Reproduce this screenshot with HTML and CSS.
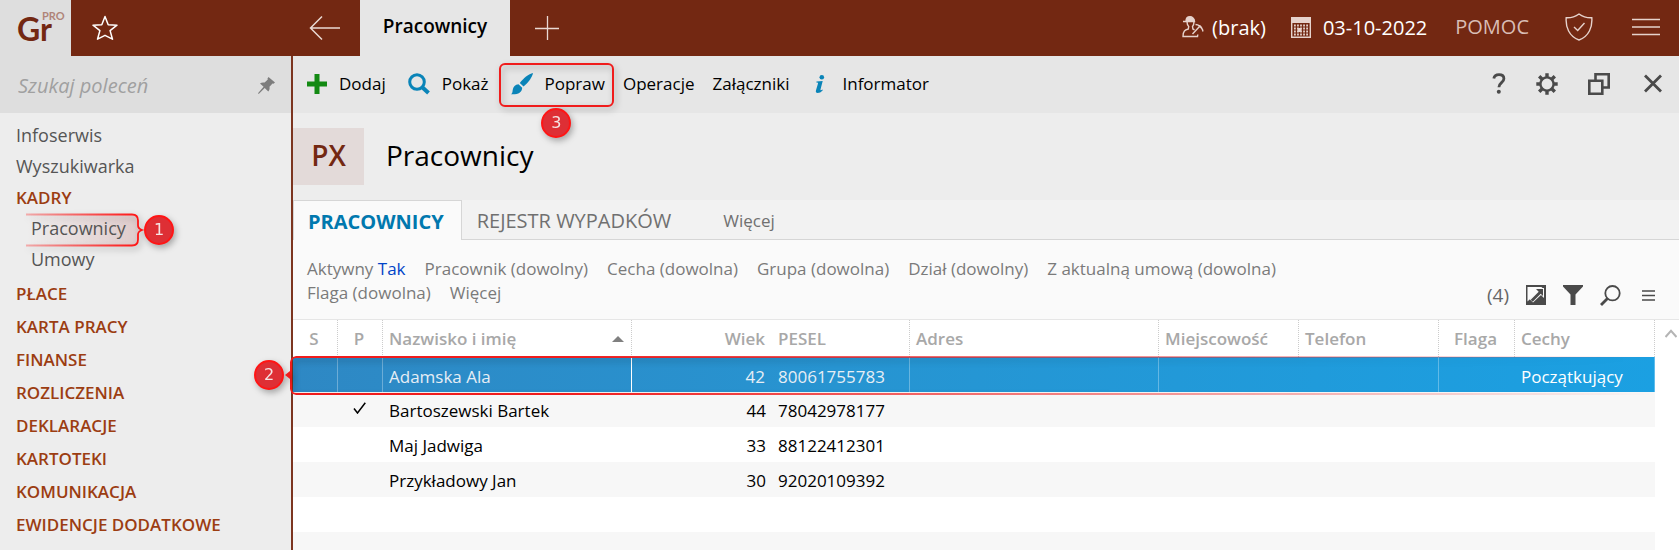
FILE: index.html
```
<!DOCTYPE html>
<html lang="pl">
<head>
    <meta charset="UTF-8">
    <meta name="viewport" content="width=device-width, initial-scale=1.0">
    <title>Pracownicy</title>
    <link rel="stylesheet" href="styles.css">
</head>
<body>
    <header class="topbar">
        <a href="#" class="logo">Gr<sup>PRO</sup></a>
        <button class="star" aria-label="Ulubione">
            <svg width="26" height="26" viewBox="0 0 26 26"><path d="M13 1.5l3.2 8.2 8.8.5-6.9 5.4 2.4 8.6L13 20.3l-7.5 3.9 2.4-8.6L1 10.2l8.8-.5z" fill="none" stroke="#fff" stroke-width="1.5" stroke-linejoin="round"/></svg>
        </button>
        <button class="back" aria-label="Wstecz">
            <svg width="32" height="26" viewBox="0 0 32 26"><path d="M13 1.5L1.5 13 13 24.5M1.5 13H31" fill="none" stroke="#ead9d4" stroke-width="1.5"/></svg>
        </button>
        <button class="card">Pracownicy</button>
        <button class="new-card" aria-label="Nowa karta">
            <svg width="24" height="24" viewBox="0 0 24 24"><path d="M12.5 0v24M0 12.5h24" stroke="#ead9d4" stroke-width="1.3"/></svg>
        </button>
        <div class="status">
            <button class="user">
                <svg width="22" height="22" viewBox="0 0 22 22" fill="none" stroke="#e6d2cc" stroke-width="1.4">
                    <path d="M1 5.500h3C4 2 6 .8 8 .8s4.500 1.500 4.500 4.700z" fill="#e6d2cc"/>
                    <path d="M5 5.500c0 3 .5 4 1.700 5l-.4 2.500C3 14 1 15 1 20.500h14.500l.3-2M12 5.500c0 3-.5 4-1.500 5l.4 2.500 1.600.8M16 9.500c2-.5 4 1.500 5 6M13.500 8.500c2 0 5.500 2 7.500 6M18 10l-7.500 8"/>
                </svg>
                (brak)
            </button>
            <button class="date">
                <svg width="20" height="21" viewBox="0 0 20 21">
                    <path d="M.7.7h18.600v19.600H.7z" fill="none" stroke="#e6d2cc" stroke-width="1.4"/>
                    <path d="M0 0h20v6H0z" fill="#e6d2cc"/>
                    <path d="M3 8.500h14M3 11.500h14M3 14.500h14M3 17.500h14" stroke="#e6d2cc" stroke-width="1.8" stroke-dasharray="1.8 1.250"/>
                    <path d="M6.500 11h4v4h-4z" fill="#e6d2cc"/>
                </svg>
                03-10-2022
            </button>
            <a href="#" class="help">POMOC</a>
            <button class="shield" aria-label="Bezpieczeństwo">
                <svg width="28" height="28" viewBox="0 0 28 28" fill="none" stroke="#e6d2cc" stroke-width="1.4"><path d="M14 1c4 3 8 4 12.800 3.800C27.500 14 24 23.500 14 27 4 23.500.5 14 1.200 4.800 6 5 10 4 14 1z"/><path d="M9 14l3.700 3.500L19.500 10"/></svg>
            </button>
            <button aria-label="Menu">
                <svg width="28" height="18" viewBox="0 0 28 18"><path d="M0 1.500h28M0 9h28M0 16.500h28" stroke="#e6d2cc" stroke-width="1.5"/></svg>
            </button>
        </div>
    </header>

    <div class="layout">
        <aside class="sidebar">
            <div class="search">
                <input type="text" placeholder="Szukaj poleceń" aria-label="Szukaj poleceń">
                <button aria-label="Przypnij">
                    <svg width="17" height="17" viewBox="0 0 17 17"><path d="M10.500 0L17 5.500l-1.500 1.200-1-.2-3 3.300c.4 2-.1 3.500-1.200 4.700L6.700 11 1.200 16.500 0 17l.4-1.300L5.600 9.800 2 6.500c1.300-1 2.800-1.300 4.600-.9l3.200-3-.3-1.200z" fill="#7d7d7d"/></svg>
                </button>
            </div>
            <nav>
                <a href="#">Infoserwis</a>
                <a href="#">Wyszukiwarka</a>
                <a href="#" class="section open">KADRY</a>
                <div class="sub marked">
                    <a href="#">Pracownicy</a>
                    <div class="callout callout-menu">
                        <svg width="120" height="34" viewBox="0 0 120 34">
                            <defs>
                                <linearGradient id="fade" gradientUnits="userSpaceOnUse" x1="0" y1="0" x2="112" y2="0">
                                    <stop offset="0" stop-color="#ff1515" stop-opacity=".3"/>
                                    <stop offset="1" stop-color="#ff1515"/>
                                </linearGradient>
                                <linearGradient id="tint">
                                    <stop offset="0" stop-color="#e03030" stop-opacity="0"/>
                                    <stop offset="1" stop-color="#c03030" stop-opacity=".14"/>
                                </linearGradient>
                            </defs>
                            <path d="M0 1.500h106q6 0 6 6v5q0 3 4 4.500-4 1.500-4 4.500v5q0 6-6 6H0z" fill="url(#tint)"/>
                            <path d="M0 1.500h106q6 0 6 6v5q0 3 4 4.500-4 1.500-4 4.500v5q0 6-6 6H0" fill="none" stroke="url(#fade)" stroke-width="1.8"/>
                        </svg>
                        <span class="badge">1</span>
                    </div>
                </div>
                <a href="#" class="sub">Umowy</a>
                <a href="#" class="section first">PŁACE</a>
                <a href="#" class="section">KARTA PRACY</a>
                <a href="#" class="section">FINANSE</a>
                <a href="#" class="section">ROZLICZENIA</a>
                <a href="#" class="section">DEKLARACJE</a>
                <a href="#" class="section">KARTOTEKI</a>
                <a href="#" class="section">KOMUNIKACJA</a>
                <a href="#" class="section">EWIDENCJE DODATKOWE</a>
            </nav>
        </aside>

        <main>
            <div class="toolbar">
                <button class="main-action">
                    <svg width="20" height="20" viewBox="0 0 20 20"><path d="M7.500 0h5v7.500H20v5h-7.500V20h-5v-7.500H0v-5h7.500z" fill="#138a13"/></svg>
                    Dodaj
                </button>
                <button class="main-action">
                    <svg width="22" height="22" viewBox="0 0 22 22" fill="none" stroke="#0a84b8"><circle cx="9" cy="9" r="7.300" stroke-width="3"/><path d="M14 14l6.500 6" stroke-width="4"/></svg>
                    Pokaż
                </button>
                <button class="edit">
                    <svg width="22" height="22" viewBox="0 0 22 22" fill="#0a84b8"><path d="M22 0c-.5 4-5 10-9.500 13.500L8.800 10C12 5.500 18 .8 22 0z"/><path d="M7.500 11.200l3.700 3.600c-.2 5-4.500 7-11.200 6.500 1.500-.8 1.400-2.300 1.700-4.300.5-3.300 2.500-5.600 5.800-5.800z"/></svg>
                    Popraw
                    <span class="callout callout-edit"><span class="badge">3</span></span>
                </button>
                <button>Operacje</button>
                <button>Załączniki</button>
                <button class="info">
                    <svg width="10" height="18" viewBox="0 0 10 18" fill="#0a84b8"><circle cx="6.800" cy="2.300" r="2.300"/><path d="M1.500 6.500L7.700 6 5.500 14.500c-.2 1 .5 1 2 0l.3.800C6 17.500 4.300 18 2.700 18c-1.700 0-2.200-1-1.700-2.800L3 8.400c.2-.8-.3-1-1.700-1z"/></svg>
                    Informator
                </button>
                <div class="window-tools">
                    <button aria-label="Pomoc">
                        <svg width="14" height="21" viewBox="0 0 14 21"><path d="M1.800 5.500C2.300 3 4.300 1.700 7 1.700c3 0 4.900 1.600 4.900 4 0 4-5 4-5 8.600" fill="none" stroke="#4a4a4a" stroke-width="2.800"/><circle cx="6.800" cy="18.700" r="2" fill="#4a4a4a"/></svg>
                    </button>
                    <button aria-label="Ustawienia">
                        <svg width="22" height="22" viewBox="0 0 22 22" fill="none" stroke="#4a4a4a"><circle cx="11" cy="11" r="6.600" stroke-width="2.400"/><path d="M11 .3v4M11 17.700v4M.3 11h4M17.700 11h4M3.200 3.200L6 6M16 16l2.800 2.800M3.200 18.800L6 16M16 6l2.800-2.800" stroke-width="3.400"/></svg>
                    </button>
                    <button aria-label="Przywróć">
                        <svg width="22" height="22" viewBox="0 0 22 22" fill="none" stroke="#4a4a4a" stroke-width="2.600"><path d="M1.300 7.700h13v13h-13z"/><path d="M7.500 7.500V1.300h13.200v13.200h-6"/></svg>
                    </button>
                    <button class="close" aria-label="Zamknij">
                        <svg width="18" height="19" viewBox="0 0 18 19"><path d="M1 1.500l16 16M17 1.500l-16 16" stroke="#4a4a4a" stroke-width="2.800"/></svg>
                    </button>
                </div>
            </div>

            <div class="heading">
                <span class="symbol">PX</span>
                <h1>Pracownicy</h1>
            </div>

            <div class="tabs">
                <button class="active">PRACOWNICY</button>
                <button>REJESTR WYPADKÓW</button>
                <button class="more">Więcej</button>
            </div>

            <div class="filters">
                <div class="filter-list">
                    <a href="#">Aktywny <b>Tak</b></a>
                    <a href="#">Pracownik (dowolny)</a>
                    <a href="#">Cecha (dowolna)</a>
                    <a href="#">Grupa (dowolna)</a>
                    <a href="#">Dział (dowolny)</a>
                    <a href="#">Z aktualną umową (dowolna)</a>
                    <a href="#">Flaga (dowolna)</a>
                    <a href="#">Więcej</a>
                </div>
                <div class="list-tools">
                    <span class="count">(4)</span>
                    <button aria-label="Eksport">
                        <svg width="20" height="20" viewBox="0 0 20 20"><path d="M0 0h20v20H0z" fill="#4a4a4a"/><path d="M1.500 2h15L1.500 16.500z" fill="#fafafa"/><path d="M8 3h10v10l-3-3-8 7.500-3.500-3.500L11 6z" fill="#fafafa"/><path d="M10 4h7v7l-2.300-2.300-8 8-2-2 8-8z" fill="#4a4a4a"/></svg>
                    </button>
                    <button aria-label="Filtr">
                        <svg width="20" height="20" viewBox="0 0 20 20"><path d="M0 0h20v1.500l-7.500 8V20h-5V9.500L0 1.500z" fill="#4a4a4a"/></svg>
                    </button>
                    <button aria-label="Szukaj">
                        <svg width="21" height="21" viewBox="0 0 21 21" fill="none" stroke="#4a4a4a"><circle cx="12.500" cy="8.200" r="7.200" stroke-width="1.800"/><path d="M7.500 13.500L1 20" stroke-width="2.800"/></svg>
                    </button>
                    <button class="list-menu" aria-label="Opcje listy">
                        <svg width="13" height="11" viewBox="0 0 13 11"><path d="M0 1h13M0 5.500h13M0 10h13" stroke="#4a4a4a" stroke-width="1.3"/></svg>
                    </button>
                </div>
            </div>

            <div class="list">
                <table>
                    <colgroup>
                        <col class="col-s">
                        <col class="col-p">
                        <col class="col-name">
                        <col class="col-age">
                        <col class="col-pesel">
                        <col>
                        <col class="col-text">
                        <col class="col-text">
                        <col class="col-flag">
                        <col class="col-text">
                    </colgroup>
                    <thead>
                        <tr>
                            <th class="center">S</th>
                            <th class="center">P</th>
                            <th class="sorted">Nazwisko i imię</th>
                            <th class="num">Wiek</th>
                            <th>PESEL</th>
                            <th>Adres</th>
                            <th>Miejscowość</th>
                            <th>Telefon</th>
                            <th class="flag">Flaga</th>
                            <th>Cechy</th>
                        </tr>
                    </thead>
                    <tbody>
                        <tr class="selected">
                            <td></td>
                            <td></td>
                            <td>Adamska Ala</td>
                            <td class="num">42</td>
                            <td>80061755783</td>
                            <td></td>
                            <td></td>
                            <td></td>
                            <td></td>
                            <td>Początkujący</td>
                        </tr>
                        <tr>
                            <td></td>
                            <td class="center"><svg width="13" height="12" viewBox="0 0 13 12"><path d="M1 6.500l3.500 4.500L12.300.7" fill="none" stroke="#000" stroke-width="1.5"/></svg></td>
                            <td>Bartoszewski Bartek</td>
                            <td class="num">44</td>
                            <td>78042978177</td>
                            <td colspan="5"></td>
                        </tr>
                        <tr>
                            <td></td>
                            <td></td>
                            <td>Maj Jadwiga</td>
                            <td class="num">33</td>
                            <td>88122412301</td>
                            <td colspan="5"></td>
                        </tr>
                        <tr>
                            <td></td>
                            <td></td>
                            <td>Przykładowy Jan</td>
                            <td class="num">30</td>
                            <td>92020109392</td>
                            <td colspan="5"></td>
                        </tr>
                        <tr><td colspan="10"></td></tr>
                        <tr><td colspan="10"></td></tr>
                    </tbody>
                </table>
                <div class="scroll">
                    <svg width="12" height="9" viewBox="0 0 12 9"><path d="M.5 8L6 1.800 11.500 8" fill="none" stroke="#b4b4b4" stroke-width="2"/></svg>
                </div>
                <div class="callout callout-row"></div>
                <span class="badge badge-row">2</span>
            </div>
        </main>
    </div>
</body>
</html>
```
FILE: styles.css
```
* {
    box-sizing: border-box;
}

body {
    margin: 0;
    min-height: 100vh;
    display: flex;
    flex-direction: column;
    font-family: "Open Sans", "Noto Sans", sans-serif;
    font-size: 17px;
    color: #000;
    background: #ededed;
    overflow: hidden;
}

a {
    color: inherit;
    text-decoration: none;
}

button {
    font: inherit;
    color: inherit;
    background: none;
    border: none;
    padding: 0;
    display: flex;
    align-items: center;
    cursor: pointer;
}

svg {
    display: block;
    flex: none;
}

/* top bar */
.topbar {
    display: flex;
    height: 56px;
    background: #732812;
    color: #fff;
}

.logo {
    display: flex;
    width: 71px;
    padding-left: 17px;
    background: #dedede;
    color: #732812;
    font-family: Lato, sans-serif;
    font-size: 32px;
    font-weight: bold;
    line-height: 57px;
}

.logo sup {
    margin: 10px 0 0 -10px;
    color: #b08478;
    font-size: 11px;
    line-height: 12px;
}

.star {
    padding-left: 21px;
    width: 238px;
}

.back {
    width: 51px;
}

.card {
    width: 150px;
    padding-bottom: 4px;
    justify-content: center;
    background: #e6e6e6;
    color: #000;
    font-size: 19px;
    font-weight: 600;
}

.new-card {
    padding-left: 25px;
}

.status {
    display: flex;
    align-items: center;
    margin-left: auto;
    padding: 0 19px 2px 0;
    font-size: 20px;
}

.user {
    gap: 8px;
    margin-right: 25px;
}

.date {
    gap: 12px;
    margin-right: 28px;
}

.help {
    color: #d9bdb5;
    margin: 0 36px 2px 0;
}

.shield {
    margin-right: 39px;
}

.layout {
    display: flex;
    flex: 1;
}

/* sidebar */
.sidebar {
    width: 293px;
    flex: none;
    border-right: 2px solid #7c3520;
}

.search {
    display: flex;
    align-items: center;
    height: 57px;
    padding: 2px 16px 0 18px;
    background: #dedede;
}

.search input {
    flex: 1;
    min-width: 0;
    padding: 0;
    border: none;
    outline: none;
    background: none;
    font: italic 20px "Open Sans", sans-serif;
}

.search input::placeholder {
    color: #a0a0a0;
}

nav {
    padding: 7px 0 0 16px;
    color: #555;
    font-size: 18px;
    line-height: 31px;
}

nav a {
    display: block;
}

.sub {
    padding-left: 15px;
}

.marked {
    position: relative;
}

.marked a {
    position: relative;
    z-index: 1;
}

.section {
    color: #9c3d12;
    font-size: 17px;
    font-weight: 600;
    line-height: 33px;
}

.section.open {
    line-height: 31px;
}

.section.first {
    margin-top: 2px;
}

/* numbered markers */
.callout {
    position: absolute;
    pointer-events: none;
    filter: drop-shadow(2px 3px 3px rgba(0, 0, 0, 0.3));
}

.badge {
    display: block;
    width: 30px;
    height: 30px;
    border: 2px solid #ff1515;
    border-radius: 50%;
    background: #de2f35;
    color: #f5e4e4;
    font: 16px/26px "DejaVu Sans", sans-serif;
    text-align: center;
}

.callout-menu {
    display: flex;
    align-items: center;
    top: 0;
    left: 10px;
}

.callout-menu .badge {
    margin-left: -2px;
}

.callout-edit {
    inset: -9px -9px -12px -12px;
    border: 2px solid #f01c1c;
    border-radius: 6px;
}

.callout-edit .badge {
    position: absolute;
    top: 43px;
    left: 50%;
    margin-left: -15px;
}

.callout-row {
    top: 36px;
    left: -3px;
    right: 24px;
    height: 39px;
    border: 2px solid #f01c1c;
    border-right: none;
    border-radius: 6px 0 0 6px;
    -webkit-mask-image: linear-gradient(to right, #000 20%, transparent);
    mask-image: linear-gradient(to right, #000 20%, transparent);
}

.badge-row {
    position: absolute;
    top: 40px;
    left: -39px;
    filter: drop-shadow(2px 3px 3px rgba(0, 0, 0, 0.3));
}

.badge-row::after {
    content: "";
    position: absolute;
    top: 9px;
    left: 29px;
    border: 4px solid transparent;
    border-left: none;
    border-right: 5px solid #f01c1c;
}

/* content */
main {
    flex: 1;
    min-width: 0;
    display: flex;
    flex-direction: column;
}

.toolbar {
    display: flex;
    align-items: center;
    gap: 18px;
    height: 57px;
    padding: 0 17px 2px 14px;
    background: #e6e6e6;
}

.toolbar button {
    gap: 12px;
}

.toolbar .main-action {
    margin-right: 4px;
}

.toolbar .edit {
    position: relative;
}

.toolbar .info {
    gap: 17px;
    margin-left: 8px;
}

.toolbar .window-tools {
    display: flex;
    gap: 30px;
    margin-left: auto;
}

.toolbar .close {
    margin-left: 4px;
}

.heading {
    display: flex;
    align-items: center;
    gap: 22px;
    height: 87px;
}

.symbol {
    width: 71px;
    height: 57px;
    background: #e3dad9;
    color: #732812;
    font-size: 28px;
    font-weight: 600;
    line-height: 55px;
    text-align: center;
}

h1 {
    margin: 0 0 4px;
    font-size: 28px;
    font-weight: normal;
}

.tabs {
    display: flex;
    height: 40px;
    background: #f2f2f2;
    border-bottom: 1px solid #d6d6d6;
    color: #707070;
    font-size: 20px;
}

.tabs button {
    padding: 2px 15px 0;
}

.tabs .active {
    margin-bottom: -1px;
    padding: 2px 17px 0 14px;
    background: #fafafa;
    border: 1px solid #d6d6d6;
    border-bottom: none;
    color: #0078ae;
    font-weight: bold;
}

.tabs .more {
    padding-left: 37px;
    font-size: 17px;
}

.filters {
    display: flex;
    align-items: flex-end;
    height: 80px;
    padding: 17px 24px 11px 14px;
    background: #fafafa;
    border-bottom: 1px solid #e6e6e6;
    color: #7a7a7a;
}

.filter-list {
    display: flex;
    flex-wrap: wrap;
    align-self: flex-start;
    flex: 1;
    column-gap: 19px;
    padding-right: 80px;
    line-height: 24px;
}

.filter-list b {
    color: #0044c8;
    font-weight: normal;
}

.list-tools {
    display: flex;
    align-items: center;
    gap: 17px;
    color: #666;
    font-size: 19px;
}

.list-menu {
    margin-left: 4px;
}

.list {
    position: relative;
    display: flex;
    flex: 1;
    background: #fff;
}

table {
    flex: 1;
    width: 100%;
    table-layout: fixed;
    border-collapse: separate;
    border-spacing: 0;
    align-self: flex-start;
}

.col-s,
.col-p {
    width: 45px;
}

.col-name {
    width: 249px;
}

.col-age {
    width: 140px;
}

.col-pesel {
    width: 138px;
}

.col-text {
    width: 140px;
}

.col-flag {
    width: 76px;
}

th,
td {
    height: 35px;
    padding: 2px 6px 0;
    line-height: 24px;
    text-align: left;
    white-space: nowrap;
}

th {
    height: 37px;
    padding-top: 1px;
    border-right: 1px dotted #ccc;
    color: #a8a8a8;
    font-weight: 600;
}

.num {
    text-align: right;
}

th.num {
    border-right-color: transparent;
}

th.center,
td.center {
    padding-right: 8px;
    text-align: center;
}

.center svg {
    display: inline-block;
    vertical-align: 3px;
}

.flag {
    text-align: right;
    padding-right: 17px;
}

.sorted::after {
    content: "";
    float: right;
    margin: 9px 1px 0 0;
    border: 6px solid transparent;
    border-top: none;
    border-bottom-color: #808080;
}

tbody tr:nth-child(even) {
    background: #f7f7f7;
}

.selected {
    background: linear-gradient(to right, #2e88c4, #2794d1 40%, #1ba0e2);
    color: #e6eef5;
}

.selected td {
    padding-top: 4px;
    border-right: 1px solid rgba(255, 255, 255, 0.3);
}

.selected td:nth-child(3) {
    border-right-color: #fff;
}

.selected td:nth-child(4),
.selected td:nth-child(7),
.selected td:nth-child(9) {
    border-right-color: transparent;
}

.selected td:last-child {
    color: #fff;
}

.scroll {
    width: 24px;
    flex: none;
    padding: 9px 0 0 10px;
}
```
